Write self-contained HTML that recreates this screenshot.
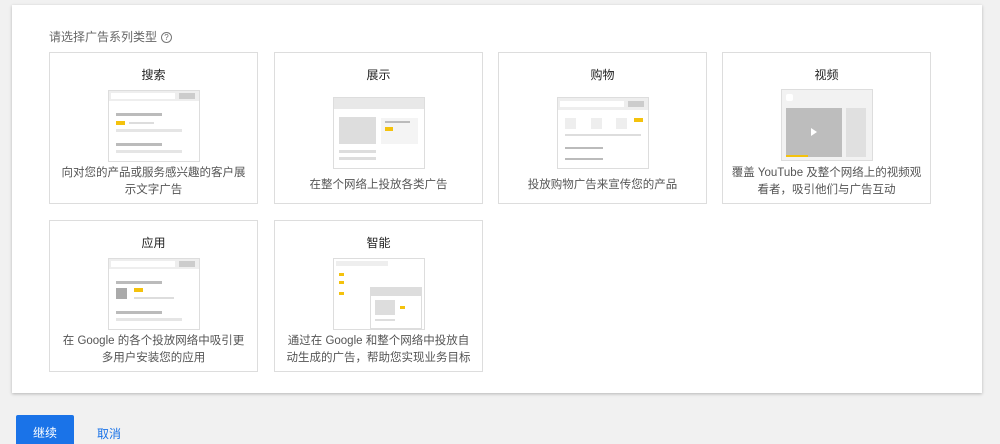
<!DOCTYPE html>
<html><head><meta charset="utf-8"><style>
*{margin:0;padding:0;box-sizing:border-box}
html,body{width:1000px;height:444px;overflow:hidden}
body{background:#f1f1f1;font-family:"Liberation Sans","Noto Sans CJK SC",sans-serif;position:relative;color:#333}
.panel{position:absolute;left:12px;top:5px;width:970px;height:388px;background:#fff;box-shadow:0 1px 3px rgba(0,0,0,.25)}
.lbl{position:absolute;left:49px;top:28px;font-size:12px;color:#666}
.q{display:inline-block;width:11px;height:11px;border:1px solid #777;border-radius:50%;font-size:8px;line-height:9px;text-align:center;margin-left:4px;vertical-align:1px}
.card{position:absolute;width:209px;height:152px;border:1px solid #ddd;background:#fff;text-align:center}
.card h3{font-size:12px;font-weight:normal;color:#222;margin-top:13px}
.img{position:absolute;left:58px;top:37px;width:92px;height:72px;border:1px solid #ddd;background:#fff}
.desc{position:absolute;left:10px;right:10px;top:112px;font-size:11.5px;line-height:17px;color:#555}
.g{position:absolute;background:#ddd}
.y{position:absolute;background:#f4c20d}
.btn{position:absolute;left:16px;top:415px;width:58px;height:32px;background:#1a73e8;color:#fff;font-size:12px;text-align:center;line-height:36px;border-radius:2px}
.cancel{position:absolute;left:97px;top:425px;font-size:12px;color:#1a73e8}
</style></head><body>
<div class="panel"></div>
<div class="lbl">请选择广告系列类型<span class="q">?</span></div>

<div class="card" style="left:49px;top:52px"><h3>搜索</h3>
<div class="img"><div class="g" style="left:0;top:0;width:90px;height:10px;background:#eee"></div><div class="g" style="left:2px;top:2px;width:64px;height:6px;background:#fff"></div><div class="g" style="left:70px;top:2px;width:16px;height:6px;background:#ccc"></div>
<div class="g" style="left:7px;top:22px;width:46px;height:3px;background:#bbb"></div><div class="y" style="left:7px;top:30px;width:9px;height:4px"></div><div class="g" style="left:20px;top:31px;width:25px;height:2px"></div><div class="g" style="left:7px;top:38px;width:66px;height:3px;background:#e5e5e5"></div>
<div class="g" style="left:7px;top:52px;width:46px;height:3px;background:#bbb"></div><div class="g" style="left:7px;top:59px;width:66px;height:3px;background:#e5e5e5"></div></div>
<div class="desc">向对您的产品或服务感兴趣的客户展示文字广告</div></div>

<div class="card" style="left:274px;top:52px"><h3>展示</h3>
<div class="img" style="top:44px;left:58px;height:72px"><div class="g" style="left:0;top:0;width:90px;height:11px;background:#e8e8e8"></div><div class="g" style="left:5px;top:19px;width:37px;height:27px"></div><div class="g" style="left:47px;top:20px;width:37px;height:26px;background:#f4f4f4"></div><div class="g" style="left:51px;top:23px;width:25px;height:2px;background:#bbb"></div><div class="y" style="left:51px;top:29px;width:8px;height:4px"></div><div class="g" style="left:5px;top:52px;width:37px;height:3px"></div><div class="g" style="left:5px;top:59px;width:37px;height:3px"></div></div>
<div class="desc" style="top:124px">在整个网络上投放各类广告</div></div>

<div class="card" style="left:498px;top:52px"><h3>购物</h3>
<div class="img" style="top:44px"><div class="g" style="left:0;top:0;width:90px;height:12px;background:#eee"></div><div class="g" style="left:2px;top:3px;width:64px;height:6px;background:#fff"></div><div class="g" style="left:70px;top:3px;width:16px;height:6px;background:#ccc"></div>
<div class="g" style="left:7px;top:20px;width:11px;height:11px;background:#eee"></div><div class="g" style="left:33px;top:20px;width:11px;height:11px;background:#eee"></div><div class="g" style="left:58px;top:20px;width:11px;height:11px;background:#eee"></div><div class="y" style="left:76px;top:20px;width:9px;height:4px"></div>
<div class="g" style="left:7px;top:36px;width:76px;height:2px"></div><div class="g" style="left:7px;top:49px;width:38px;height:2px;background:#bbb"></div><div class="g" style="left:7px;top:60px;width:38px;height:2px;background:#bbb"></div></div>
<div class="desc" style="top:124px">投放购物广告来宣传您的产品</div></div>

<div class="card" style="left:722px;top:52px"><h3>视频</h3>
<div class="img" style="top:36px;height:72px;background:#f2f2f2"><div class="g" style="left:4px;top:18px;width:56px;height:49px;background:#bdbdbd"></div><div style="position:absolute;left:29px;top:38px;border-left:6px solid #fff;border-top:4px solid transparent;border-bottom:4px solid transparent"></div><div class="y" style="left:4px;top:65px;width:22px;height:2px"></div><div class="g" style="left:64px;top:18px;width:20px;height:49px;background:#e0e0e0"></div><div class="g" style="left:4px;top:4px;width:7px;height:7px;background:#fff;border-radius:2px"></div></div>
<div class="desc" style="left:6px;right:6px">覆盖 YouTube 及整个网络上的视频观看者，吸引他们与广告互动</div></div>

<div class="card" style="left:49px;top:220px"><h3>应用</h3>
<div class="img"><div class="g" style="left:0;top:0;width:90px;height:10px;background:#eee"></div><div class="g" style="left:2px;top:2px;width:64px;height:6px;background:#fff"></div><div class="g" style="left:70px;top:2px;width:16px;height:6px;background:#ccc"></div>
<div class="g" style="left:7px;top:22px;width:46px;height:3px;background:#bbb"></div><div class="g" style="left:7px;top:29px;width:11px;height:11px;background:#aaa"></div><div class="y" style="left:25px;top:29px;width:9px;height:4px"></div><div class="g" style="left:25px;top:38px;width:40px;height:2px"></div><div class="g" style="left:7px;top:52px;width:46px;height:3px;background:#bbb"></div><div class="g" style="left:7px;top:59px;width:66px;height:3px;background:#e5e5e5"></div></div>
<div class="desc">在 Google 的各个投放网络中吸引更多用户安装您的应用</div></div>

<div class="card" style="left:274px;top:220px"><h3>智能</h3>
<div class="img"><div class="g" style="left:2px;top:2px;width:52px;height:5px;background:#eee"></div><div class="y" style="left:5px;top:14px;width:5px;height:3px"></div><div class="y" style="left:5px;top:22px;width:5px;height:3px"></div><div class="y" style="left:5px;top:33px;width:5px;height:3px"></div>
<div class="g" style="left:36px;top:28px;width:52px;height:42px;background:#fff;border:1px solid #ddd"></div><div class="g" style="left:37px;top:29px;width:50px;height:8px;background:#ddd"></div><div class="g" style="left:41px;top:41px;width:20px;height:15px"></div><div class="y" style="left:66px;top:47px;width:5px;height:3px"></div><div class="g" style="left:41px;top:60px;width:20px;height:2px"></div></div>
<div class="desc">通过在 Google 和整个网络中投放自动生成的广告，帮助您实现业务目标</div></div>

<div class="btn">继续</div>
<div class="cancel">取消</div>
</body></html>
